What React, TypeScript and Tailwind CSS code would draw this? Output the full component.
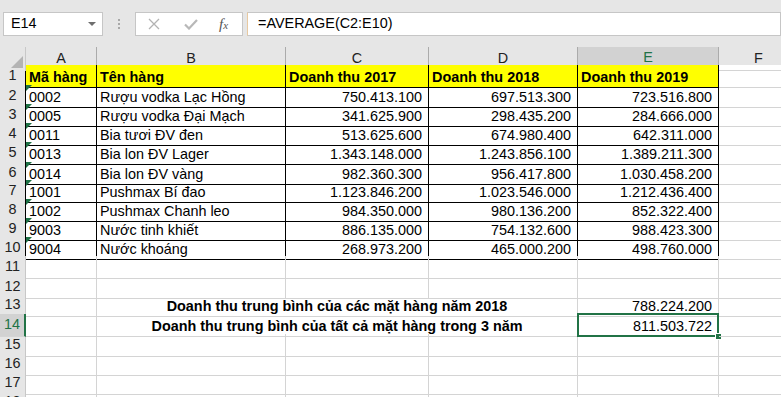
import React from 'react';

const cols = 'grid grid-cols-[26px_71px_189px_143px_149px_141px_80px]';
const heights = ['h-[20px]', 'h-[19px]', 'h-[19px]', 'h-[19px]', 'h-[20px]', 'h-[18px]', 'h-[19px]', 'h-[19px]', 'h-[19px]', 'h-[19px]', 'h-[20px]', 'h-[18px]', 'h-[20px]', 'h-[20px]', 'h-[19px]', 'h-[19px]', 'h-[19px]', 'h-[19px]'];

const data = [
  ['0002', 'Rượu vodka Lạc Hồng', '750.413.100', '697.513.300', '723.516.800'],
  ['0005', 'Rượu vodka Đại Mạch', '341.625.900', '298.435.200', '284.666.000'],
  ['0011', 'Bia tươi ĐV đen', '513.625.600', '674.980.400', '642.311.000'],
  ['0013', 'Bia lon ĐV Lager', '1.343.148.000', '1.243.856.100', '1.389.211.300'],
  ['0014', 'Bia lon ĐV vàng', '982.360.300', '956.417.800', '1.030.458.200'],
  ['1001', 'Pushmax Bí đao', '1.123.846.200', '1.023.546.000', '1.212.436.400'],
  ['1002', 'Pushmax Chanh leo', '984.350.000', '980.136.200', '852.322.400'],
  ['9003', 'Nước tinh khiết', '886.135.000', '754.132.600', '988.423.300'],
  ['9004', 'Nước khoáng', '268.973.200', '465.000.200', '498.760.000'],
];

const RowHead = ({ n, table, selected }: { n: number; table?: boolean; selected?: boolean }) => (
  <div
    className={`flex items-center justify-center border-b border-[#d4d4d4] ${
      selected
        ? 'bg-[#d2d2d2] text-[#217346] border-r-2 border-r-[#217346]'
        : table
        ? 'bg-[#e6e6e6] text-[#222] border-r border-r-black'
        : 'bg-[#e6e6e6] text-[#222] border-r border-r-[#c8c8c8]'
    }`}
  >
    {n}
  </div>
);

const Cell = ({
  children,
  table,
  right,
  bold,
  yellow,
  flag,
}: {
  children?: React.ReactNode;
  table?: boolean;
  right?: boolean;
  bold?: boolean;
  yellow?: boolean;
  flag?: boolean;
}) => (
  <div
    className={`relative flex items-end pb-[2px] leading-[16px] whitespace-nowrap overflow-hidden border-r border-b ${
      table ? 'border-black' : 'border-[#d4d4d4]'
    } ${right ? 'justify-end pr-[6px]' : 'pl-[3px]'} ${bold ? 'font-bold' : ''} ${yellow ? 'bg-[#ffff00]' : ''}`}
  >
    {flag && (
      <span className="absolute top-0 left-0 w-0 h-0 border-t-[6px] border-t-[#1e7145] border-r-[6px] border-r-transparent" />
    )}
    {children}
  </div>
);

export default function App() {
  return (
    <div className="w-[781px] h-[397px] overflow-hidden bg-white text-[14.4px] text-black font-['Liberation_Sans',Arial,sans-serif]">
      {/* formula bar */}
      <div className="h-[47px] bg-[#e6e6e6] pt-[12px] pl-[3px] flex items-start">
        <div className="w-[100px] h-[24px] bg-white border border-[#c6c6c6] flex items-center justify-between pl-[7px] pr-[6px]">
          <span>E14</span>
          <svg width="8" height="5" viewBox="0 0 8 5">
            <path d="M0 0 L8 0 L4 4 Z" fill="#6e6e6e" />
          </svg>
        </div>
        <div className="w-[32px] h-[24px] flex flex-col items-center justify-center gap-[2px]">
          <span className="w-[2px] h-[2px] bg-[#a8a8a8]" />
          <span className="w-[2px] h-[2px] bg-[#a8a8a8]" />
          <span className="w-[2px] h-[2px] bg-[#a8a8a8]" />
        </div>
        <div className="w-[108px] h-[24px] bg-white border border-[#c6c6c6] flex items-center">
          <svg className="ml-[12px]" width="12" height="12" viewBox="0 0 12 12">
            <path d="M1 1 L11 11 M11 1 L1 11" stroke="#b3b3b3" strokeWidth="1.3" fill="none" />
          </svg>
          <svg className="ml-[24px]" width="14" height="11" viewBox="0 0 14 11">
            <path d="M1 5.5 L5 9.5 L13 1" stroke="#b8b8b8" strokeWidth="2.2" fill="none" />
          </svg>
          <span className="ml-[21px] italic text-[#555] font-['Liberation_Serif',serif] text-[15px] leading-none">
            f<span className="text-[11px]">x</span>
          </span>
        </div>
        <div className="ml-[4px] flex-1 h-[24px] bg-white border border-[#c6c6c6] border-l-[#e8c9a0] flex items-center pl-[10px]">
          =AVERAGE(C2:E10)
        </div>
      </div>

      {/* column headers */}
      <div className={`${cols} h-[18px] bg-[#e6e6e6] text-[#222]`}>
        <div className="relative border-r border-[#c8c8c8]">
          <span className="absolute right-[2px] bottom-[3px] w-0 h-0 border-l-[12px] border-l-transparent border-b-[12px] border-b-[#b4b4b4]" />
        </div>
        {['A', 'B', 'C', 'D'].map((c) => (
          <div key={c} className="flex items-center justify-center border-r border-[#ababab] border-b border-b-black">
            {c}
          </div>
        ))}
        <div className="flex items-center justify-center bg-[#d2d2d2] text-[#217346] border-r border-[#ababab] border-b-2 border-b-[#217346]">
          E
        </div>
        <div className="flex items-center justify-center border-r border-[#ababab] border-b border-b-[#d4d4d4]">F</div>
      </div>

      {/* row 1 */}
      <div className={`${cols} ${heights[0]}`}>
        <RowHead n={1} table />
        <Cell table bold yellow>Mã hàng</Cell>
        <Cell table bold yellow>Tên hàng</Cell>
        <Cell table bold yellow>Doanh thu 2017</Cell>
        <Cell table bold yellow>Doanh thu 2018</Cell>
        <Cell table bold yellow>Doanh thu 2019</Cell>
        <Cell />
      </div>

      {data.map((r, i) => (
        <div key={r[0]} className={`${cols} ${heights[i + 1]}`}>
          <RowHead n={i + 2} table />
          <Cell table flag>{r[0]}</Cell>
          <Cell table>{r[1]}</Cell>
          <Cell table right>{r[2]}</Cell>
          <Cell table right>{r[3]}</Cell>
          <Cell table right>{r[4]}</Cell>
          <Cell />
        </div>
      ))}

      {[11, 12].map((n) => (
        <div key={n} className={`${cols} ${heights[n - 1]}`}>
          <RowHead n={n} />
          <Cell />
          <Cell />
          <Cell />
          <Cell />
          <Cell />
          <Cell />
        </div>
      ))}

      {/* row 13 */}
      <div className={`${cols} ${heights[12]}`}>
        <RowHead n={13} />
        <Cell />
        <div className="col-span-3 flex items-end justify-center pb-[2px] leading-[16px] font-bold border-r border-b border-[#d4d4d4] whitespace-nowrap">
          Doanh thu trung bình của các mặt hàng năm 2018
        </div>
        <Cell right>788.224.200</Cell>
        <Cell />
      </div>

      {/* row 14 */}
      <div className={`${cols} ${heights[13]} relative z-10`}>
        <RowHead n={14} selected />
        <Cell />
        <div className="col-span-3 flex items-end justify-center pb-[2px] leading-[16px] font-bold border-r border-b border-[#d4d4d4] whitespace-nowrap">
          Doanh thu trung bình của tất cả mặt hàng trong 3 năm
        </div>
        <div className="relative flex items-end justify-end pr-[6px] pb-[2px] leading-[16px] border-r border-b border-[#d4d4d4]">
          811.503.722
          <span className="absolute -top-[1px] -left-[1px] -right-[1px] -bottom-[1px] border-2 border-[#217346]" />
          <span className="absolute -right-[4px] -bottom-[4px] w-[7px] h-[7px] bg-[#217346] border border-white" />
        </div>
        <Cell />
      </div>

      {[15, 16, 17, 18].map((n) => (
        <div key={n} className={`${cols} ${heights[n - 1]}`}>
          <RowHead n={n} />
          <Cell />
          <Cell />
          <Cell />
          <Cell />
          <Cell />
          <Cell />
        </div>
      ))}
    </div>
  );
}
